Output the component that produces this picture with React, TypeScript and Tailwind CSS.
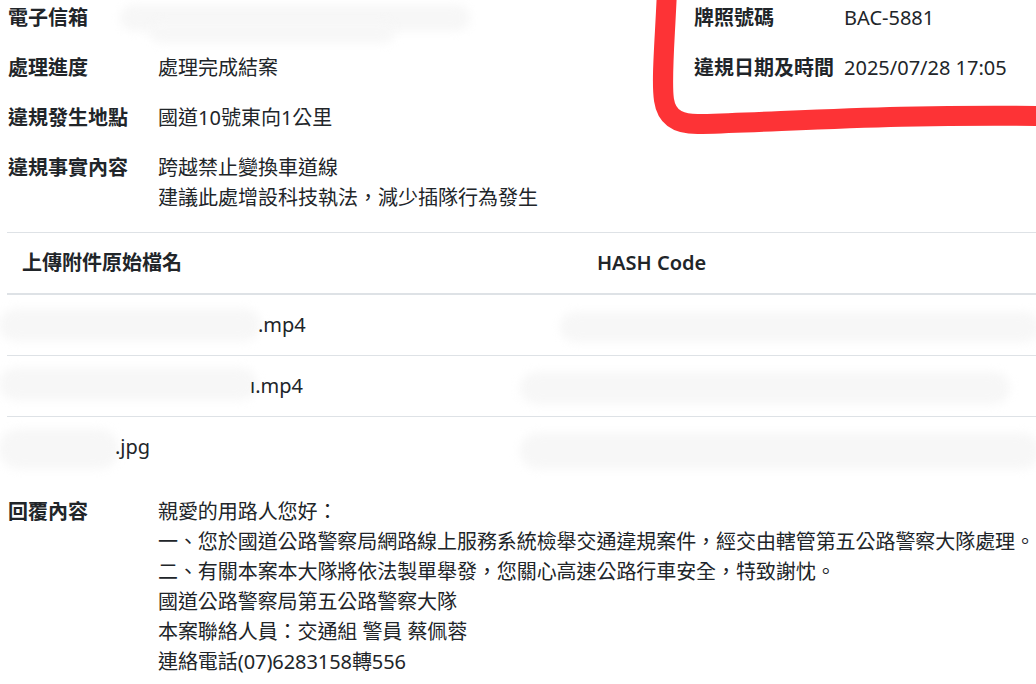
import React from "react";

const font = { fontFamily: '"Noto Sans", "Noto Sans CJK TC", sans-serif' };

function Field({ label, children }: { label: string; children: React.ReactNode }) {
  return (
    <div className="flex">
      <div className="w-[150px] shrink-0 font-bold">{label}</div>
      <div className="whitespace-nowrap">{children}</div>
    </div>
  );
}

function Blob({ className }: { className: string }) {
  return <span className={`absolute rounded-full bg-[#f7f7f7] blur-[5px] ${className}`} />;
}

const files = [
  { ext: ".mp4", pad: "pl-[251px]", left: "-left-[8px] top-[14px] h-[32px] w-[262px]", hash: "left-[-22px] top-[17px] h-[30px] w-[480px]" },
  { ext: "ı.mp4", pad: "pl-[243px]", left: "-left-[8px] top-[12px] h-[32px] w-[258px]", hash: "left-[-62px] top-[16px] h-[32px] w-[490px]" },
  { ext: ".jpg", pad: "pl-[108px]", left: "-left-[8px] top-[12px] h-[40px] w-[120px]", hash: "left-[-62px] top-[16px] h-[36px] w-[520px]" },
];

const reply = [
  "親愛的用路人您好：",
  "一、您於國道公路警察局網路線上服務系統檢舉交通違規案件，經交由轄管第五公路警察大隊處理。",
  "二、有關本案本大隊將依法製單舉發，您關心高速公路行車安全，特致謝忱。",
  "國道公路警察局第五公路警察大隊",
  "本案聯絡人員：交通組 警員 蔡佩蓉",
  "連絡電話(07)6283158轉556",
];

export default function App() {
  return (
    <div style={font} className="relative h-[684px] w-[1036px] overflow-hidden bg-white text-[20px] leading-[30px] text-[#212529]">
      <div className="flex pt-[3px]">
        <div className="relative flex w-[694px] shrink-0 flex-col gap-[20px] pl-[8px]">
          <Field label="電子信箱">&nbsp;</Field>
          <Field label="處理進度">處理完成結案</Field>
          <Field label="違規發生地點">國道10號東向1公里</Field>
          <Field label="違規事實內容">
            <div>跨越禁止變換車道線</div>
            <div>建議此處增設科技執法，減少插隊行為發生</div>
          </Field>
          <Blob className="left-[120px] top-[2px] h-[26px] w-[350px]" />
          <Blob className="left-[150px] top-[18px] h-[22px] w-[245px]" />
        </div>
        <div className="flex flex-col gap-[20px]">
          <Field label="牌照號碼">BAC-5881</Field>
          <Field label="違規日期及時間">2025/07/28 17:05</Field>
        </div>
      </div>

      <table className="ml-[7px] mt-[19px] w-[1366px] border-collapse">
        <thead>
          <tr>
            <th className="w-[575px] border-t border-b-2 border-[#dee2e6] p-[15px] text-left font-semibold">上傳附件原始檔名</th>
            <th className="border-t border-b-2 border-[#dee2e6] p-[15px] text-left font-semibold">HASH Code</th>
          </tr>
        </thead>
        <tbody>
          {files.map((f, i) => (
            <tr key={i}>
              <td className={`relative border-t border-[#dee2e6] p-[15px] ${f.pad}`}>
                <Blob className={f.left} />
                <span className="relative">{f.ext}</span>
              </td>
              <td className="relative border-t border-[#dee2e6] p-[15px]">
                <Blob className={f.hash} />
                &nbsp;
              </td>
            </tr>
          ))}
        </tbody>
      </table>

      <div className="mt-[20px] flex pl-[8px]">
        <div className="w-[150px] shrink-0 font-bold">回覆內容</div>
        <div className="whitespace-nowrap tracking-[-0.07px]">
          {reply.map((line) => (
            <div key={line}>{line}</div>
          ))}
        </div>
      </div>

      <svg className="pointer-events-none absolute left-0 top-0" width="1036" height="684" viewBox="0 0 1036 684">
        <path
          d="M667 -10 C665 40 661 80 664 100 C667 120 682 125 702 124 C800 121 900 114 1045 116"
          fill="none"
          stroke="#fd3336"
          strokeWidth="20"
          strokeLinecap="round"
        />
      </svg>
    </div>
  );
}
